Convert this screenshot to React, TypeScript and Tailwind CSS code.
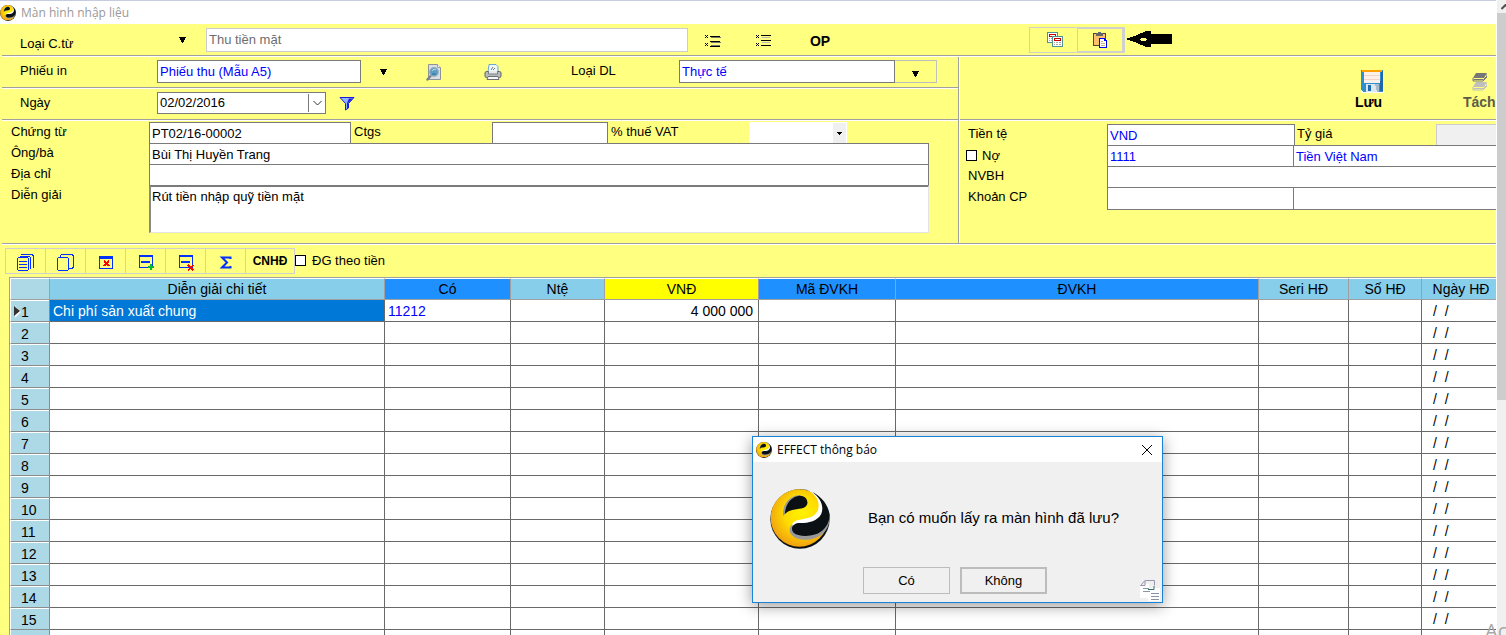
import type { ReactNode } from "react";
import clsx from "clsx";

const columns = [
  { title: "Diễn giải chi tiết", width: "w-[335px]", tone: "bg-[#87ceeb]" },
  { title: "Có", width: "w-[126px]", tone: "bg-[#1e90ff]" },
  { title: "Ntệ", width: "w-[94px]", tone: "bg-[#87ceeb]" },
  { title: "VNĐ", width: "w-[154px]", tone: "bg-[#ffff00]" },
  { title: "Mã ĐVKH", width: "w-[137px]", tone: "bg-[#1e90ff]" },
  { title: "ĐVKH", width: "w-auto", tone: "bg-[#1e90ff]" },
  { title: "Seri HĐ", width: "w-[90px]", tone: "bg-[#87ceeb]" },
  { title: "Số HĐ", width: "w-[73px]", tone: "bg-[#87ceeb]" },
  { title: "Ngày HĐ", width: "w-[74px]", tone: "bg-[#87ceeb]" },
];

const emptyDate = "/  /";
const firstRow = ["Chi phí sản xuất chung", "11212", "", "4 000 000", "", "", "", "", emptyDate];
const blankRow = ["", "", "", "", "", "", "", "", emptyDate];
const rows = Array.from({ length: 15 }, (_, i) => (i === 0 ? firstRow : blankRow));

function Logo({ className }: { className: string }) {
  return (
    <svg viewBox="0 0 178 178" className={className} aria-hidden="true">
      <defs>
        <radialGradient id="gold" cx="0.55" cy="0.42" r="0.6">
          <stop offset="0" stopColor="#fff200" />
          <stop offset="0.5" stopColor="#ffdc00" />
          <stop offset="1" stopColor="#f0a010" />
        </radialGradient>
      </defs>
      <circle cx="89" cy="89" r="88" fill="#0a1014" />
      <circle cx="87" cy="86" r="85" fill="url(#gold)" />
      <path
        d="M100 1C136 5 168 33 176 72C180 96 172 118 158 131C130 154 88 158 66 138C52 124 58 104 80 99C112 94 146 84 146 48C146 26 130 8 100 1Z"
        fill="#999"
      />
      <path
        d="M100 1C140 6 170 34 176 70C170 96 150 120 110 120C84 120 66 114 66 104C72 88 100 92 124 82C146 72 150 44 136 24C128 12 116 4 100 1Z"
        fill="#fff"
      />
      <path
        d="M124 8C152 20 174 48 177 78C176 104 162 122 142 132C118 142 84 142 70 130C60 118 66 104 84 101C112 102 140 96 152 74C162 50 148 24 124 8Z"
        fill="#0a1014"
      />
      <path d="M39 80C36 50 54 20 88 18L98 24C70 28 52 46 45 74Z" fill="#999" />
      <path d="M44 74C46 44 64 22 88 20C106 20 114 34 110 46C104 60 84 58 66 62C56 64 50 68 44 74Z" fill="#0a1014" />
    </svg>
  );
}

function Separator() {
  return <div className="ml-0.5 h-0.5 shrink-0 border-t border-[#a0a0a0] bg-white" />;
}

function DownTriangle() {
  return (
    <svg width="9" height="8" viewBox="0 0 9 8" shapeRendering="crispEdges" aria-hidden="true">
      <path d="M1 1h7v1H7v2H6v2H5v1H4V6H3V4H2V2H1z" />
    </svg>
  );
}

function IconButton({ label, className, children }: { label: string; className?: string; children: ReactNode }) {
  return (
    <button type="button" aria-label={label} className={clsx("flex items-center justify-center", className)}>
      {children}
    </button>
  );
}

function ListIcon({ light = false }: { light?: boolean }) {
  return (
    <svg width="17" height="14" viewBox="0 0 17 14" shapeRendering="crispEdges" aria-hidden="true">
      <path d="M1 1h1v1H1zM3 1h1v1H3zM2 2h1v1H2zM1 3h1v1H1zM3 3h1v1H3zM1 9h1v1H1zM3 9h1v1H3zM2 10h1v1H2zM1 11h1v1H1zM3 11h1v1H3z" />
      {light ? (
        <path d="M6 1h10v1H6zM6 6h10v1H6zM6 11h10v1H6z" />
      ) : (
        <path d="M6 2h10v1H6zM6 7h10v1H6zM6 12h10v1H6z" />
      )}
      <path d={light ? "M7 3h8v1H7zM7 8h8v1H7z" : "M7 3h10v1H7zM7 8h10v1H7zM7 11h9v1H7z"} fill={light ? "#bbb" : "#777"} />
    </svg>
  );
}

function PreviewIcon() {
  return (
    <svg width="16" height="18" viewBox="0 0 16 18" aria-hidden="true">
      <path d="M2.500 1.500h9l3 3v12h-12z" fill="#dcdfe2" stroke="#8d9498" />
      <path d="M11.500 1.500v3h3" fill="#fff" stroke="#9aa0a4" />
      <path d="M5 12.500L1.500 16.500" stroke="#75838b" strokeWidth="2.400" strokeLinecap="round" />
      <circle cx="8" cy="9" r="4.300" fill="#5d9cc4" stroke="#95aebc" strokeWidth="1.200" />
      <path d="M6 8c1-2 3-2 4-1" stroke="#b8e0ec" fill="none" />
      <path d="M6 11h4" stroke="#2c6e9c" />
    </svg>
  );
}

function PrinterIcon() {
  return (
    <svg width="18" height="18" viewBox="0 0 18 18" aria-hidden="true">
      <path d="M4 9L5 1.500h7l2 2V9z" fill="#eef7fc" stroke="#6ba7d1" />
      <path d="M7 7l2-3M9 7l2-2" stroke="#777" />
      <rect x="1" y="8.500" width="16" height="6" rx="1.500" fill="#b7babd" stroke="#5f6468" />
      <path d="M4.500 8v3h9V8" fill="#e9e9ea" stroke="#7c8084" />
      <path d="M4 13.500h10l1 3H3z" fill="#f7f7f7" stroke="#6c7074" />
    </svg>
  );
}

function FunnelIcon() {
  return (
    <svg width="16" height="15" viewBox="0 0 16 15" aria-hidden="true">
      <path d="M1 1.500h14L9.500 7.500V12L6.500 14V7.500z" fill="#8fb5ff" stroke="#1a1ae0" />
      <path d="M10 2.500h4L9.200 7v5L8 13V7z" fill="#2020d8" />
    </svg>
  );
}

function CalendarsIcon() {
  return (
    <svg width="16" height="16" viewBox="0 0 16 16" shapeRendering="crispEdges" aria-hidden="true">
      {[0, 1].map((n) => (
        <g key={n} transform={n ? "translate(5 4)" : undefined}>
          <path d="M0 0h11v11H0z" fill="#4f9492" />
          <path d="M1 1h9v9H1z" fill="#fff" />
          <path d="M2 2h7v3H2z" fill="#c00" />
          <path d="M3 3h5v1H3z" fill="#fff" />
          <path d="M2 6h1v1H2zM4 6h2v1H4zM7 6h2v1H7zM2 8h1v1H2zM4 8h2v1H4zM7 8h2v1H7z" fill="#aaa" />
        </g>
      ))}
    </svg>
  );
}

function PasteIcon() {
  return (
    <svg width="14" height="16" viewBox="0 0 14 16" shapeRendering="crispEdges" aria-hidden="true">
      <path d="M0 1h13v13H0z" fill="#4c4434" />
      <path d="M1 2h11v11H1z" fill="#ffc069" />
      <path d="M3 1h2V0h3v1h2v3H3z" fill="#666" />
      <path d="M6 6h6v1h1v1h1v8H6z" fill="#00f" />
      <path d="M7 7h4v2h2v6H7z" fill="#fff" />
      <path d="M8 9h2v1H8zM8 11h4v1H8zM8 13h4v1H8z" fill="#bdb77c" />
    </svg>
  );
}

function PointerArrow() {
  return (
    <svg width="48" height="17" viewBox="0 0 48 17" shapeRendering="crispEdges" aria-hidden="true">
      <path d="M0 8L12 4L21 0h5v3h20l1 1v8l-1 1H26v3h-5L12 12z" />
      <path d="M14 8l4-1h2l2 1-2 2h-3z" fill="#ffff80" />
    </svg>
  );
}

function SaveIcon() {
  return (
    <svg width="23" height="23" viewBox="0 0 23 23" shapeRendering="crispEdges" aria-hidden="true">
      <path d="M0 21h23v2H0z" fill="#fff" />
      <path d="M0 0h22v22H2L0 20z" fill="#2f8fcf" />
      <path d="M20 1h2v20h-3z" fill="#1f67a6" />
      <path d="M3 0h16v13H3z" fill="#fbf0ea" />
      <path d="M1 0h20v2H1z" fill="#ffa200" />
      <path d="M3 5h16v1H3zM3 9h16v1H3z" fill="#f3d3c8" />
      <path d="M5 14h13v8H5z" fill="#dce6ee" />
      <path d="M7 15h3v6H7z" fill="#1c6cae" />
      <path d="M14 14h4v8h-2z" fill="#a9bccb" />
    </svg>
  );
}

function BooksIcon() {
  return (
    <svg width="15" height="19" viewBox="0 0 15 19" aria-hidden="true">
      <path d="M1 6L4 1h11l-3 5z" fill="#777" />
      <path d="M1 6v3h10l4-4V2M1.500 7.500h10L15 4" fill="none" stroke="#777" />
      <path d="M1 15l3-5h11l-3 5z" fill="#bfbfbf" />
      <path d="M1 15v3h10l4-4v-3M1.500 16.500h10L15 13" fill="none" stroke="#bfbfbf" />
    </svg>
  );
}

function GridToolIcon({ kind }: { kind: string }) {
  return (
    <svg width="17" height="17" viewBox="0 0 17 17" shapeRendering="crispEdges" fill="none" stroke="#0030ff" aria-hidden="true">
      {(kind === "lines" || kind === "copy") && (
        <>
          <path d="M.5 4.5l1-1h9l1 1v11l-1 1h-9l-1-1z" />
          <path d="M4 .5h11l1 1v12" />
        </>
      )}
      {kind === "lines" && <path d="M2.500 2.500h10l1 1v11M2 7.500h8M2 10.500h8M2 13.500h8" />}
      {kind === "copy" && <path d="M3.500 1v2M12 14.500h3l1-1" />}
      {kind === "clear" && (
        <>
          <path d="M2.500 2.500h13v12h-13z" />
          <path d="M2 3h14" strokeWidth="3" />
          <path d="M7 6.500l5 5.500M12 6.500l-5 5.500" stroke="#f00" strokeWidth="2" />
        </>
      )}
      {(kind === "add" || kind === "remove") && (
        <>
          <path d="M2.500 1.500h13v12h-13z" />
          <path d="M2 2h14" strokeWidth="2" />
          <path d="M4 8h9" strokeWidth="2" />
        </>
      )}
      {kind === "add" && <path d="M14 10v6M11 13h6" stroke="#0b3" strokeWidth="2" />}
      {kind === "remove" && <path d="M11 11l5.500 5.500M16.500 11L11 16.500" stroke="#f00" strokeWidth="2" />}
      {kind === "sum" && (
        <path d="M13.500 5V3.500H5l5 5-5 5h8.500V12" strokeWidth="2" shapeRendering="auto" />
      )}
    </svg>
  );
}

function ResizeGripIcon() {
  return (
    <svg width="22" height="23" viewBox="0 0 22 23" aria-hidden="true">
      <path d="M1 5h9v14H1zM9 9h12v13H9z" fill="#fff" />
      <path d="M1.500 6.500L6 1.500V6.500zM6.500 1.500h9v5" fill="#eee" stroke="#9993ad" />
      <path d="M9 10.500h6V7" fill="none" stroke="#2f7266" />
      <path d="M4 9.500h6M4 12.500h7M12 14.500h8M12 17.500h8M12 20.500h8" stroke="#8795a5" />
    </svg>
  );
}

const field = "min-w-0 rounded-none bg-white outline-none";
const boxed = clsx(field, "border border-[#7a7a7a] px-0.5");
const stacked = clsx(field, "h-full border-x border-t border-[#7a7a7a] px-0.5");
const checkbox = "size-[11px] appearance-none border border-black bg-white checked:bg-black";

function VoucherTypeBar() {
  return (
    <div className="flex h-[31px] shrink-0 items-center pl-5">
      <label htmlFor="voucher-type" className="w-[150px] shrink-0 pt-2">
        Loại C.từ
      </label>
      <IconButton label="Chọn loại C.từ" className="w-[25px] shrink-0 pt-px">
        <DownTriangle />
      </IconButton>
      <input
        id="voucher-type"
        disabled
        defaultValue="Thu tiền mặt"
        className={clsx(field, "ml-[11px] h-6 w-[482px] border border-[#cccccc] px-0.5 text-[#6d6d6d]")}
      />
      <IconButton label="Danh sách" className="w-12 shrink-0 pt-0.5">
        <ListIcon />
      </IconButton>
      <IconButton label="Danh sách rút gọn" className="ml-[3px] w-12 shrink-0 pt-0.5">
        <ListIcon light />
      </IconButton>
      <button type="button" className="ml-[3px] w-[60px] shrink-0 pt-0.5 text-sm font-bold">
        OP
      </button>
      <div className="ml-[179px] flex h-[26px] shrink-0 border border-[#d0d0d0]">
        <IconButton label="Lịch" className="w-[47px] pl-0.5">
          <CalendarsIcon />
        </IconButton>
        <IconButton label="Lấy ra màn hình đã lưu" className="w-[47px] border border-r-2 border-[#d0d0d0]">
          <PasteIcon />
        </IconButton>
      </div>
      <PointerArrow />
    </div>
  );
}

function PrintBar() {
  return (
    <div className="flex h-[30px] items-start pt-[3px] pl-5">
      <label htmlFor="print-form" className="w-[137px] shrink-0 leading-[22px]">
        Phiếu in
      </label>
      <input id="print-form" defaultValue="Phiếu thu (Mẫu A5)" className={clsx(boxed, "h-[23px] w-[204px] text-[#0000ff]")} />
      <IconButton label="Chọn phiếu in" className="h-[23px] w-11 shrink-0">
        <DownTriangle />
      </IconButton>
      <IconButton label="Xem trước" className="h-[23px] w-[58px] shrink-0">
        <PreviewIcon />
      </IconButton>
      <IconButton label="In" className="h-[23px] w-[60px] shrink-0">
        <PrinterIcon />
      </IconButton>
      <label htmlFor="data-type" className="ml-12 w-[108px] shrink-0 leading-[22px]">
        Loại DL
      </label>
      <input id="data-type" defaultValue="Thực tế" className={clsx(boxed, "h-[23px] w-[216px] text-[#0000ff]")} />
      <IconButton label="Chọn loại DL" className="h-[23px] w-[42px] shrink-0 border border-l-0 border-[#c0c0c0] pt-1">
        <DownTriangle />
      </IconButton>
    </div>
  );
}

function DateBar() {
  return (
    <div className="flex h-[30px] items-start pt-[3px] pl-5">
      <label htmlFor="voucher-date" className="w-[137px] shrink-0 leading-[22px]">
        Ngày
      </label>
      <div className="flex h-[22px] w-[169px] shrink-0 border border-[#7a7a7a] bg-white">
        <input id="voucher-date" defaultValue="02/02/2016" className={clsx(field, "flex-1 px-0.5")} />
        <IconButton label="Mở lịch" className="my-px w-[17px] border-l border-[#7a7a7a]">
          <svg width="9" height="6" viewBox="0 0 9 6" fill="none" stroke="#333" aria-hidden="true">
            <path d="M.500 1l4 4 4-4" />
          </svg>
        </IconButton>
      </div>
      <IconButton label="Lọc" className="ml-[13px] h-[22px]">
        <FunnelIcon />
      </IconButton>
    </div>
  );
}

function VoucherForm() {
  return (
    <form className="grid grid-cols-[138px_minmax(0,780px)] pt-px pr-7 pl-[11px]">
      <label htmlFor="voucher-no" className="h-[21px] leading-5">
        Chứng từ
      </label>
      <div className="flex h-[21px]">
        <input id="voucher-no" defaultValue="PT02/16-00002" className={clsx(stacked, "w-[202px]")} />
        <label htmlFor="ledger" className="w-[141px] shrink-0 pl-[3px] leading-5">
          Ctgs
        </label>
        <input id="ledger" className={clsx(stacked, "w-[116px]")} />
        <label htmlFor="vat" className="w-[141px] shrink-0 pl-[3px] leading-5">
          % thuế VAT
        </label>
        <div className="relative w-[98px] shrink-0">
          <select id="vat" className={clsx(field, "h-full w-full appearance-none")}>
            <option value=""></option>
          </select>
          <span className="pointer-events-none absolute top-px right-px bottom-0 flex w-[13px] items-center justify-center bg-[#f0f0f0]">
            <svg width="5" height="3" viewBox="0 0 5 3" shapeRendering="crispEdges" aria-hidden="true">
              <path d="M0 0h5v1H4v1H3v1H2V2H1V1H0z" />
            </svg>
          </span>
        </div>
      </div>
      <label htmlFor="person" className="h-[21px] leading-5">
        Ông/bà
      </label>
      <input id="person" defaultValue="Bùi Thị Huyền Trang" className={stacked} />
      <label htmlFor="address" className="h-[21px] leading-5">
        Địa chỉ
      </label>
      <input id="address" className={stacked} />
      <label htmlFor="note" className="leading-5">
        Diễn giải
      </label>
      <textarea
        id="note"
        defaultValue="Rút tiền nhập quỹ tiền mặt"
        className={clsx(
          field,
          "block h-12 w-full resize-none border-t-2 border-r border-b border-l-2 border-t-[#7a7a7a] border-r-[#e3e3e3] border-b-[#e3e3e3] border-l-[#8a8a8a] px-px leading-5"
        )}
      />
    </form>
  );
}

function ActionPanel() {
  return (
    <div className="flex h-[62px] items-start overflow-hidden pt-[13px] pl-[395px]">
      <button type="button" className="flex w-[27px] shrink-0 flex-col items-center text-sm leading-[18px] font-bold">
        <span className="ml-2">
          <SaveIcon />
        </span>
        Lưu
      </button>
      <button type="button" className="ml-[81px] flex shrink-0 flex-col items-center text-sm leading-[18px] font-bold text-[#5c5c4a]">
        <span className="flex h-[23px] items-center">
          <BooksIcon />
        </span>
        Tách
      </button>
    </div>
  );
}

function AccountForm() {
  return (
    <form className="grid grid-cols-[139px_minmax(0,1fr)] pt-[3px] pl-2">
      <label htmlFor="currency" className="h-[21px] leading-5">
        Tiền tệ
      </label>
      <div className="flex h-[21px]">
        <input id="currency" defaultValue="VND" className={clsx(stacked, "w-[188px] shrink-0 text-[#0000ff]")} />
        <label htmlFor="rate" className="w-[141px] shrink-0 pl-0.5 leading-5">
          Tỷ giá
        </label>
        <input id="rate" disabled className="h-full min-w-0 flex-1 border-t border-l border-[#cccccc] bg-[#f0f0f0]" />
      </div>
      <div className="-ml-0.5 flex h-[21px] items-center gap-[5px]">
        <input id="debit" type="checkbox" className={checkbox} />
        <label htmlFor="debit">Nợ</label>
      </div>
      <div className="flex h-[21px]">
        <input aria-label="Tài khoản nợ" defaultValue="1111" className={clsx(stacked, "w-[186px] shrink-0 border-r-0 text-[#0000ff]")} />
        <input aria-label="Tên tài khoản" defaultValue="Tiền Việt Nam" className={clsx(stacked, "flex-1 border-r-0 text-[#0000ff]")} />
      </div>
      <label htmlFor="seller" className="h-[21px] leading-5">
        NVBH
      </label>
      <input id="seller" className={clsx(stacked, "border-r-0")} />
      <label htmlFor="cost" className="h-[23px] leading-5">
        Khoản CP
      </label>
      <div className="flex h-[23px] border-b border-[#7a7a7a]">
        <input id="cost" className={clsx(stacked, "w-[186px] shrink-0 border-r-0")} />
        <input aria-label="Tên khoản CP" className={clsx(stacked, "flex-1 border-r-0")} />
      </div>
    </form>
  );
}

function GridToolbar() {
  const tools = [
    ["lines", "Danh sách dòng"],
    ["copy", "Sao chép"],
    ["clear", "Xóa hết"],
    ["add", "Thêm dòng"],
    ["remove", "Xóa dòng"],
    ["sum", "Tổng"],
  ];
  return (
    <div className="flex h-8 shrink-0 items-start pt-[3px] pl-[5px]">
      <div className="flex h-[26px] border border-[#d0d0d0]">
        {tools.map(([kind, label]) => (
          <IconButton key={kind} label={label} className="w-10 border-r border-[#d0d0d0] pt-0.5">
            <GridToolIcon kind={kind} />
          </IconButton>
        ))}
        <button type="button" className="w-12 text-xs font-bold">
          CNHĐ
        </button>
      </div>
      <div className="flex h-[25px] items-center gap-1.5">
        <input id="by-amount" type="checkbox" className={checkbox} />
        <label htmlFor="by-amount">ĐG theo tiền</label>
      </div>
    </div>
  );
}

function DetailGrid() {
  return (
    <div className="ml-[9px] min-h-0 flex-1 overflow-hidden border-t border-l border-[#a0a0a0] bg-white text-sm">
      <table className="w-full table-fixed border-separate border-spacing-0">
        <thead>
          <tr className="h-[22px]">
            <td className="w-10 border-t border-r border-b border-l border-[#a0a0a0] border-t-white border-l-white bg-[#add8e6] p-0" />
            {columns.map((col) => (
              <th
                key={col.title}
                className={clsx(
                  "border-t border-r border-b border-[#a0a0a0] border-t-white p-0 leading-5 font-normal whitespace-nowrap last:border-r-0 last:pl-1",
                  col.width,
                  col.tone
                )}
              >
                {col.title}
              </th>
            ))}
          </tr>
        </thead>
        <tbody>
          {rows.map((cells, r) => (
            <tr key={r} className="h-[22px]">
              <th className="border-r border-b border-l border-[#8c8c8c] border-l-white bg-[#add8e6] p-0 font-normal">
                <span className="flex h-[21px] items-center border-t border-white pt-0.5">
                  <svg width="10" height="12" viewBox="0 0 10 12" className={clsx(r > 0 && "invisible")} aria-hidden="true">
                    <path d="M4 0v12L10 6z" fill="#fff" />
                    <path d="M3 0v10l6-5z" fill="#333" />
                  </svg>
                  {r + 1}
                </span>
              </th>
              {cells.map((text, c) => (
                <td
                  key={c}
                  className={clsx(
                    "border-r border-b border-[#696969] px-[3px] pt-px pb-0 leading-5 whitespace-pre last:border-r-0",
                    r === 0 && c === 0 && "bg-[#0078d7] text-white",
                    c === 1 && "text-[#0000ff]",
                    c === 3 && "pr-[5px] text-right",
                    c === 8 && "pl-[11px]"
                  )}
                >
                  {text}
                </td>
              ))}
            </tr>
          ))}
          {/* next row is only just in view */}
          <tr className="h-[22px]">
            <td className="border-r border-l border-[#8c8c8c] border-l-white bg-[#add8e6] p-0" />
            {columns.map((col) => (
              <td key={col.title} className="border-r border-[#696969] p-0 last:border-r-0" />
            ))}
          </tr>
        </tbody>
      </table>
    </div>
  );
}

function MessageDialog() {
  return (
    <div
      role="dialog"
      aria-labelledby="dialog-title"
      className="absolute top-[436px] left-[752px] w-[411px] border border-[#1883d7] bg-[#f0f0f0] shadow-[0_3px_14px_rgba(0,0,0,0.4)]"
    >
      <div className="flex h-[25px] items-center bg-white pr-2 pl-[3px]">
        <Logo className="size-4" />
        <h2 id="dialog-title" className="ml-[5px] flex-1 font-['Open_Sans','Noto_Sans',sans-serif] text-xs leading-4">
          EFFECT thông báo
        </h2>
        <IconButton label="Đóng" className="size-3.5">
          <svg width="12" height="12" viewBox="0 0 12 12" stroke="#000" aria-hidden="true">
            <path d="M1 1l10 10M11 1L1 11" />
          </svg>
        </IconButton>
      </div>
      <div className="flex h-[105px] items-center pt-2 pl-[17px]">
        <Logo className="size-[60px]" />
        <p className="ml-[38px] text-[15px] whitespace-nowrap">Bạn có muốn lấy ra màn hình đã lưu?</p>
      </div>
      <div className="flex h-[35px] items-start pl-[110px]">
        <button type="button" className="h-[27px] w-[87px] border border-[#bcbcbc]">
          Có
        </button>
        <button type="button" className="ml-2.5 h-[27px] w-[87px] border-2 border-[#bcbcbc]">
          Không
        </button>
        <span className="mt-3 mr-px ml-auto">
          <ResizeGripIcon />
        </span>
      </div>
    </div>
  );
}

function ScrollBar() {
  return (
    <div className="flex w-2.5 shrink-0 flex-col overflow-hidden border-l border-white bg-[#f0f0f0]">
      <IconButton label="Cuộn lên" className="h-[13px] w-4 shrink-0">
        <svg width="9" height="6" viewBox="0 0 9 6" fill="none" stroke="#505050" strokeWidth="2" aria-hidden="true">
          <path d="M.500 5l4-4 4 4" />
        </svg>
      </IconButton>
      <div className="h-[61%] w-full bg-[#cdcdcd]" />
    </div>
  );
}

export default function App() {
  return (
    <div className="relative flex h-screen overflow-hidden bg-[#ffff80] font-['Liberation_Sans',Arial,sans-serif] text-[13px] text-black">
      <main className="flex min-w-0 flex-1 flex-col overflow-hidden">
        <header className="flex h-6 shrink-0 items-center border-t border-[#c6cde0] bg-white">
          <Logo className="size-4" />
          <h1 className="ml-[5px] font-['Open_Sans','Noto_Sans',sans-serif] text-xs text-[#999999]">Màn hình nhập liệu</h1>
        </header>
        <VoucherTypeBar />
        <Separator />
        <div className="grid h-[186px] shrink-0 grid-cols-[minmax(0,958fr)_minmax(0,538fr)]">
          <div>
            <PrintBar />
            <Separator />
            <DateBar />
            <Separator />
            <VoucherForm />
          </div>
          <div className="overflow-hidden border-l border-[#a0a0a0]">
            <div className="h-full border-l border-white">
              <ActionPanel />
              <div className="h-0.5 border-t border-[#a0a0a0] bg-white" />
              <AccountForm />
            </div>
          </div>
        </div>
        <Separator />
        <GridToolbar />
        <DetailGrid />
      </main>
      <ScrollBar />
      <span className="pointer-events-none absolute top-[617px] left-[1485px] font-['Open_Sans','Noto_Sans',sans-serif] text-xl whitespace-nowrap text-[#a9a9a9]">
        Ac
      </span>
      <MessageDialog />
    </div>
  );
}
